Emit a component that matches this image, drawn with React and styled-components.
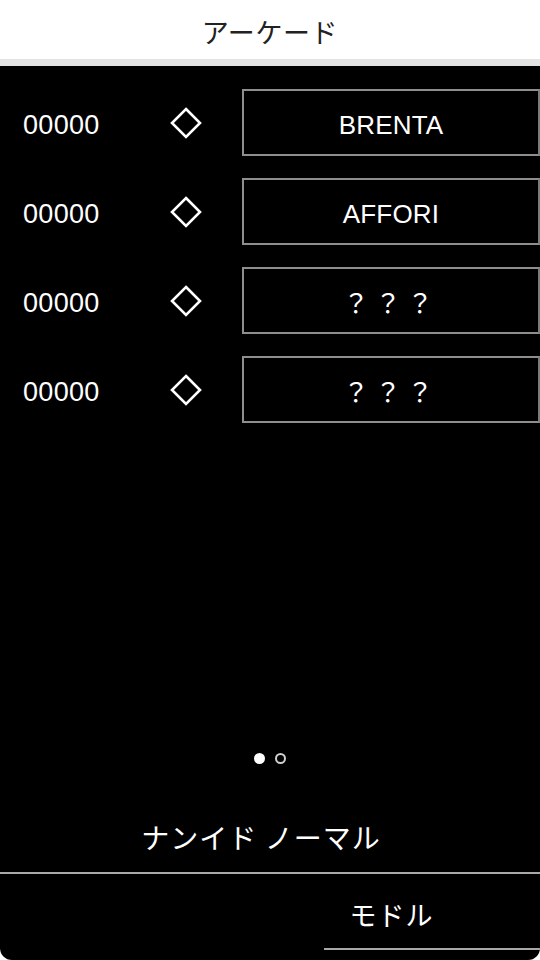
import React from "react";
import styled, { createGlobalStyle } from "styled-components";

const GlobalStyle = createGlobalStyle`
  html, body {
    margin: 0;
    padding: 0;
    background: #ffffff;
  }
  * {
    box-sizing: border-box;
  }
`;

const Screen = styled.div`
  width: 540px;
  height: 960px;
  display: flex;
  flex-direction: column;
  background: #ffffff;
  font-family: "Liberation Sans", "Noto Sans CJK JP", sans-serif;
`;

const Header = styled.header`
  height: 66px;
  padding-top: 4px;
  display: flex;
  align-items: center;
  justify-content: center;
  background: #ffffff;
  border-bottom: 7px solid #e3e3e3;
  color: #222222;
  font-family: "Noto Sans CJK JP", sans-serif;
  font-size: 27px;
  letter-spacing: 0.6px;
`;

const Panel = styled.main`
  flex: 1;
  display: flex;
  flex-direction: column;
  background: #000000;
  border-radius: 0 0 12px 12px;
  color: #ffffff;
  overflow: hidden;
`;

const List = styled.div`
  display: flex;
  flex-direction: column;
  gap: 22px;
  padding-top: 23px;
`;

const Row = styled.div`
  height: 67px;
  display: flex;
  align-items: center;
  padding-left: 23px;
`;

const Score = styled.span`
  width: 147px;
  padding-top: 5px;
  font-size: 27px;
  letter-spacing: 0.3px;
`;

const Diamond = styled.svg`
  width: 32px;
  height: 32px;
  flex: none;
`;

const StageBox = styled.div`
  margin-left: 40px;
  flex: 1;
  height: 100%;
  display: flex;
  align-items: center;
  justify-content: center;
  padding-top: ${(p) => (p.$locked ? "2px" : "5px")};
  border: 2px solid #8e8e8e;
  border-right-color: #7a7a7a;
  font-size: 26px;
  font-family: ${(p) =>
    p.$locked
      ? `"Noto Sans CJK JP", sans-serif`
      : `"Liberation Sans", sans-serif`};
  letter-spacing: ${(p) => (p.$locked ? "6px" : "0.2px")};
`;

const Spacer = styled.div`
  flex: 1;
`;

const Dots = styled.div`
  display: flex;
  justify-content: center;
  gap: 10px;
  margin-bottom: 38px;
`;

const Dot = styled.span`
  width: 11px;
  height: 11px;
  border-radius: 50%;
  background: ${(p) => (p.$active ? "#ffffff" : "transparent")};
  border: 2px solid ${(p) => (p.$active ? "#ffffff" : "#cfcfcf")};
`;

const Mode = styled.div`
  height: 72px;
  display: flex;
  align-items: center;
  justify-content: center;
  padding-right: 18px;
  border-bottom: 2px solid #a8a8a8;
  font-family: "Noto Sans CJK JP", sans-serif;
  font-size: 28px;
  letter-spacing: 1px;
`;

const FooterRow = styled.div`
  height: 86px;
  display: flex;
  justify-content: flex-end;
`;

const BackButton = styled.button`
  position: relative;
  width: 297px;
  height: 76px;
  padding: 4px 0 0;
  background: transparent;
  border: none;
  color: #ffffff;
  font-family: "Noto Sans CJK JP", sans-serif;
  font-size: 27px;
  letter-spacing: 1px;

  &::after {
    content: "";
    position: absolute;
    left: 81px;
    right: 0;
    bottom: 0;
    height: 2px;
    background: #a8a8a8;
  }
`;

const stages = [
  { score: "00000", name: "BRENTA" },
  { score: "00000", name: "AFFORI" },
  { score: "00000", name: "？？？", locked: true },
  { score: "00000", name: "？？？", locked: true },
];

function DiamondIcon() {
  return (
    <Diamond viewBox="0 0 32 32">
      <polygon
        points="16,2 30,16 16,30 2,16"
        fill="none"
        stroke="#ffffff"
        strokeWidth="2.6"
        strokeLinejoin="miter"
      />
    </Diamond>
  );
}

export default function App() {
  return (
    <>
      <GlobalStyle />
      <Screen>
        <Header>アーケード</Header>
        <Panel>
          <List>
            {stages.map((stage, idx) => (
              <Row key={idx}>
                <Score>{stage.score}</Score>
                <DiamondIcon />
                <StageBox $locked={stage.locked}>{stage.name}</StageBox>
              </Row>
            ))}
          </List>
          <Spacer />
          <Dots>
            <Dot $active />
            <Dot />
          </Dots>
          <Mode>ナンイド ノーマル</Mode>
          <FooterRow>
            <BackButton>モドル</BackButton>
          </FooterRow>
        </Panel>
      </Screen>
    </>
  );
}
